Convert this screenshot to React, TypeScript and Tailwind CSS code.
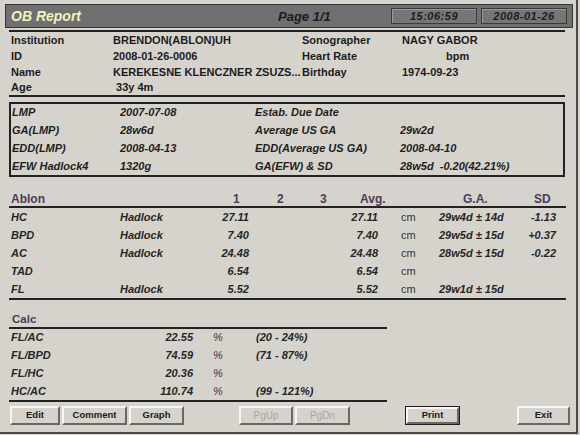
const info = [
  { h: "h-[17px]", l1: "Institution", v1: "BRENDON(ABLON)UH", l2: "Sonographer", v2: "NAGY GABOR", pad: "" },
  { h: "h-[15px]", l1: "ID", v1: "2008-01-26-0006", l2: "Heart Rate", v2: "bpm", pad: "pl-[44px]" },
  { h: "h-[16px]", l1: "Name", v1: "KEREKESNE KLENCZNER ZSUZS...", l2: "Birthday", v2: "1974-09-23", pad: "" },
  { h: "h-[15px]", l1: "Age", v1: " 33y 4m", l2: "", v2: "", pad: "" },
];

const box = [
  ["LMP", "2007-07-08", "Estab. Due Date", ""],
  ["GA(LMP)", "28w6d", "Average US GA", "29w2d"],
  ["EDD(LMP)", "2008-04-13", "EDD(Average US GA)", "2008-04-10"],
  ["EFW Hadlock4", "1320g", "GA(EFW) & SD", "28w5d  -0.20(42.21%)"],
];

const ablon = [
  { n: "HC", m: "Hadlock", v: "27.11", a: "27.11", ga: "29w4d ± 14d", sd: "-1.13" },
  { n: "BPD", m: "Hadlock", v: "7.40", a: "7.40", ga: "29w5d ± 15d", sd: "+0.37" },
  { n: "AC", m: "Hadlock", v: "24.48", a: "24.48", ga: "28w5d ± 15d", sd: "-0.22" },
  { n: "TAD", m: "", v: "6.54", a: "6.54", ga: "", sd: "" },
  { n: "FL", m: "Hadlock", v: "5.52", a: "5.52", ga: "29w1d ± 15d", sd: "" },
];

const calc = [
  ["FL/AC", "22.55", "(20 - 24%)"],
  ["FL/BPD", "74.59", "(71 - 87%)"],
  ["FL/HC", "20.36", ""],
  ["HC/AC", "110.74", "(99 - 121%)"],
];

function Btn({ label, w, cls = "", off = false, def = false }: { label: string; w: string; cls?: string; off?: boolean; def?: boolean }) {
  return (
    <div className={`${w} ${cls} h-[19px] ${def ? "border border-[#1e1e1e]" : ""}`}>
      <div
        className={`h-full flex items-center justify-center border-t-2 border-l-2 border-b-2 border-r-2 border-t-[#f6f5f2] border-l-[#f6f5f2] border-b-[#6a6864] border-r-[#6a6864] ${
          off ? "text-[10px] text-[#a8a6a2] font-normal" : "text-[9.5px] text-[#1a1a1a] font-bold"
        }`}
      >
        {label}
      </div>
    </div>
  );
}

export default function App() {
  return (
    <div className="w-[580px] h-[435px] bg-[#d6d3cd] font-['Liberation_Sans',Arial,sans-serif] overflow-hidden">
      <div className="w-[578px] h-[434px] border-r-2 border-b-2 border-[#4a4a4a] flex flex-col">
        {/* title bar */}
        <div className="mt-[4px] ml-[5px] w-[568px] h-[24px] bg-[#707070] border border-[#363636] flex items-center">
          <div className="w-[272px] pl-[5px] text-[14px] font-bold italic text-[#f2f2bc] leading-none">OB Report</div>
          <div className="w-[113px] text-[13px] font-bold italic text-[#1c1c1c] leading-none">Page 1/1</div>
          <div className="w-[86px] h-[16px] bg-[#767676] border border-[#3a3a3a] shadow-[inset_1px_1px_0_#9a9a9a] flex items-center justify-center text-[11px] font-bold italic text-[#1e1e1e] tracking-[0.5px]">
            15:06:59
          </div>
          <div className="ml-[4px] w-[86px] h-[16px] bg-[#767676] border border-[#3a3a3a] shadow-[inset_1px_1px_0_#9a9a9a] flex items-center justify-center text-[11px] font-bold italic text-[#1e1e1e] tracking-[0.5px]">
            2008-01-26
          </div>
        </div>

        {/* patient info */}
        <div className="mt-[2px] ml-[9px] w-[556px] border-t-2 border-b-2 border-[#222]">
          {info.map((r) => (
            <div key={r.l1} className={`${r.h} grid grid-cols-[104px_189px_100px_1fr] items-center text-[11px] font-bold text-[#1c1c1c] leading-none`}>
              <div className="pl-[2px]">{r.l1}</div>
              <div className="whitespace-pre">{r.v1}</div>
              <div>{r.l2}</div>
              <div className={r.pad}>{r.v2}</div>
            </div>
          ))}
        </div>

        {/* dates box */}
        <div className="mt-[5px] ml-[9px] w-[556px] border-2 border-[#222]">
          {box.map((r) => (
            <div key={r[0]} className="h-[17.75px] grid grid-cols-[109px_135px_145px_1fr] items-center text-[11px] font-bold italic text-[#1e1e1e] leading-none">
              <div className="pl-[1px]">{r[0]}</div>
              <div>{r[1]}</div>
              <div>{r[2]}</div>
              <div className="whitespace-pre">{r[3]}</div>
            </div>
          ))}
        </div>

        {/* Ablon measurements */}
        <div className="mt-[14px] ml-[9px] w-[557px]">
          <div className="h-[17px] flex items-center border-b-2 border-[#222] text-[12px] font-bold text-[#4d3c5a] leading-none">
            <div className="w-[224px] pl-[2px]">Ablon</div>
            <div className="w-[44px]">1</div>
            <div className="w-[43px]">2</div>
            <div className="w-[40px]">3</div>
            <div className="w-[103px]">Avg.</div>
            <div className="w-[71px]">G.A.</div>
            <div>SD</div>
          </div>
          <div className="border-b-2 border-[#222]">
            {ablon.map((r) => (
              <div key={r.n} className="h-[18px] grid grid-cols-[111px_80px_50px_43px_43px_42px_61px_76px_41px] items-center text-[11px] font-bold italic text-[#262626] leading-none">
                <div className="pl-[2px]">{r.n}</div>
                <div>{r.m}</div>
                <div className="text-right pr-[1px]">{r.v}</div>
                <div />
                <div />
                <div className="text-right">{r.a}</div>
                <div className="pl-[23px] not-italic font-normal text-[#333]">cm</div>
                <div>{r.ga}</div>
                <div className="text-right">{r.sd}</div>
              </div>
            ))}
          </div>
        </div>

        {/* Calc */}
        <div className="mt-[12px] ml-[9px] w-[378px]">
          <div className="h-[17px] flex items-center border-b-2 border-[#222] pl-[3px] text-[11.5px] font-bold text-[#4d3c5a] leading-none">
            Calc
          </div>
          <div className="border-b-2 border-[#222]">
            {calc.map((r) => (
              <div key={r[0]} className="h-[17.75px] grid grid-cols-[141px_43px_63px_1fr] items-center text-[11px] font-bold italic text-[#262626] leading-none">
                <div className="pl-[2px]">{r[0]}</div>
                <div className="text-right">{r[1]}</div>
                <div className="pl-[20px] font-normal text-[#333]">%</div>
                <div>{r[2]}</div>
              </div>
            ))}
          </div>
        </div>

        {/* buttons */}
        <div className="mt-[4px] ml-[10px] flex">
          <Btn label="Edit" w="w-[50px]" />
          <Btn label="Comment" w="w-[65px]" cls="ml-[2px]" />
          <Btn label="Graph" w="w-[55px]" cls="ml-[2px]" />
          <Btn label="PgUp" w="w-[54px]" cls="ml-[55px]" off />
          <Btn label="PgDn" w="w-[55px]" cls="ml-[2px]" off />
          <Btn label="Print" w="w-[55px]" cls="ml-[55px]" def />
          <Btn label="Exit" w="w-[53px]" cls="ml-[57px]" />
        </div>
      </div>
    </div>
  );
}
